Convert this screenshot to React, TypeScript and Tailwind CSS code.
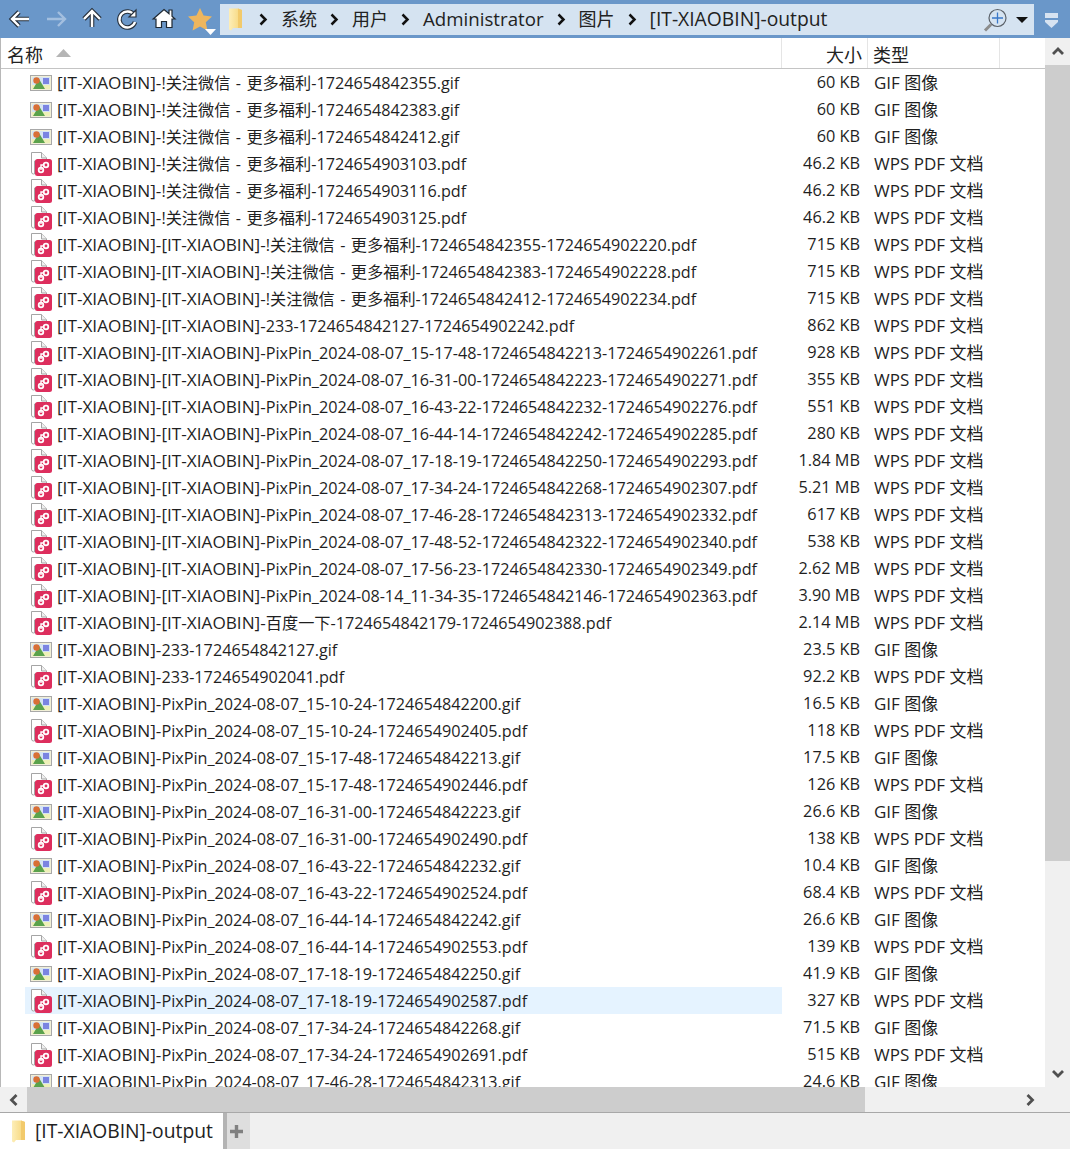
const font = 'font-["Open_Sans","Noto_Sans_CJK_SC",sans-serif]';

const G = 'GIF 图像';
const P = 'WPS PDF 文档';
const A = '[IT-XIAOBIN]-';
const B = '[IT-XIAOBIN]-[IT-XIAOBIN]-';
const C = '[IT-XIAOBIN]-[IT-XIAOBIN]-PixPin_2024-08-';
const D = '[IT-XIAOBIN]-PixPin_2024-08-07_';

const rows: [string, string][] = [
  [A + '!关注微信 - 更多福利-1724654842355.gif', '60 KB'],
  [A + '!关注微信 - 更多福利-1724654842383.gif', '60 KB'],
  [A + '!关注微信 - 更多福利-1724654842412.gif', '60 KB'],
  [A + '!关注微信 - 更多福利-1724654903103.pdf', '46.2 KB'],
  [A + '!关注微信 - 更多福利-1724654903116.pdf', '46.2 KB'],
  [A + '!关注微信 - 更多福利-1724654903125.pdf', '46.2 KB'],
  [B + '!关注微信 - 更多福利-1724654842355-1724654902220.pdf', '715 KB'],
  [B + '!关注微信 - 更多福利-1724654842383-1724654902228.pdf', '715 KB'],
  [B + '!关注微信 - 更多福利-1724654842412-1724654902234.pdf', '715 KB'],
  [B + '233-1724654842127-1724654902242.pdf', '862 KB'],
  [C + '07_15-17-48-1724654842213-1724654902261.pdf', '928 KB'],
  [C + '07_16-31-00-1724654842223-1724654902271.pdf', '355 KB'],
  [C + '07_16-43-22-1724654842232-1724654902276.pdf', '551 KB'],
  [C + '07_16-44-14-1724654842242-1724654902285.pdf', '280 KB'],
  [C + '07_17-18-19-1724654842250-1724654902293.pdf', '1.84 MB'],
  [C + '07_17-34-24-1724654842268-1724654902307.pdf', '5.21 MB'],
  [C + '07_17-46-28-1724654842313-1724654902332.pdf', '617 KB'],
  [C + '07_17-48-52-1724654842322-1724654902340.pdf', '538 KB'],
  [C + '07_17-56-23-1724654842330-1724654902349.pdf', '2.62 MB'],
  [C + '14_11-34-35-1724654842146-1724654902363.pdf', '3.90 MB'],
  [B + '百度一下-1724654842179-1724654902388.pdf', '2.14 MB'],
  [A + '233-1724654842127.gif', '23.5 KB'],
  [A + '233-1724654902041.pdf', '92.2 KB'],
  [D + '15-10-24-1724654842200.gif', '16.5 KB'],
  [D + '15-10-24-1724654902405.pdf', '118 KB'],
  [D + '15-17-48-1724654842213.gif', '17.5 KB'],
  [D + '15-17-48-1724654902446.pdf', '126 KB'],
  [D + '16-31-00-1724654842223.gif', '26.6 KB'],
  [D + '16-31-00-1724654902490.pdf', '138 KB'],
  [D + '16-43-22-1724654842232.gif', '10.4 KB'],
  [D + '16-43-22-1724654902524.pdf', '68.4 KB'],
  [D + '16-44-14-1724654842242.gif', '26.6 KB'],
  [D + '16-44-14-1724654902553.pdf', '139 KB'],
  [D + '17-18-19-1724654842250.gif', '41.9 KB'],
  [D + '17-18-19-1724654902587.pdf', '327 KB'],
  [D + '17-34-24-1724654842268.gif', '71.5 KB'],
  [D + '17-34-24-1724654902691.pdf', '515 KB'],
  [D + '17-46-28-1724654842313.gif', '24.6 KB'],
];

function GifIcon() {
  return (
    <svg width="22" height="16" viewBox="0 0 22 16" className="shrink-0">
      <rect x="0.5" y="0.5" width="21" height="15" fill="#f1efd6" stroke="#a8a8a8" />
      <rect x="2" y="2" width="18" height="8" fill="#d5e4f4" />
      <rect x="2" y="10" width="18" height="4" fill="#eef0b8" />
      <path d="M3 14L9 4l6 10z" fill="#5ba24c" />
      <circle cx="6.500" cy="5.500" r="3.200" fill="#d96f35" />
      <rect x="13" y="3" width="6" height="6" fill="#7a84e2" />
    </svg>
  );
}

function PdfIcon() {
  return (
    <svg width="22" height="26" viewBox="0 0 22 26" className="shrink-0">
      <path d="M1.500 1.500h10l5 5.500v3h-12v13h-1q-2 0-2-2z" fill="#fff" stroke="#a5a5a5" />
      <path d="M11.500 1.500v5.500h5" fill="#efefef" stroke="#a5a5a5" />
      <rect x="5" y="8" width="17" height="17" rx="2.500" fill="#dd2e5d" />
      <circle cx="16" cy="14" r="2.300" fill="none" stroke="#fff" strokeWidth="1.800" />
      <circle cx="11" cy="19" r="2.300" fill="none" stroke="#fff" strokeWidth="1.800" />
      <path d="M13.500 14h-2.500v5" fill="none" stroke="#fff" strokeWidth="1.400" />
    </svg>
  );
}

function FolderIcon({ className, id }: { className: string; id: string }) {
  return (
    <svg viewBox="0 0 15 23" className={className}>
      <defs>
        <linearGradient id={id} x1="0" x2="1" y1="0" y2="0">
          <stop offset="0" stopColor="#fdeeb8" />
          <stop offset="0.7" stopColor="#f8dc8a" />
          <stop offset="1" stopColor="#f1c765" />
        </linearGradient>
      </defs>
      <path d="M1 0.500h9l4 1.500v18H5l-2 2.500-2-1z" fill={`url(#${id})`} />
      <path d="M10 0.500l4 1.500v18h-4z" fill="#f2ca6b" />
    </svg>
  );
}

function Chevron({ dir }: { dir: 'up' | 'down' | 'left' | 'right' }) {
  const paths = {
    up: 'M2 9l5-5 5 5',
    down: 'M2 5l5 5 5-5',
    left: 'M9.500 2l-5 5 5 5',
    right: 'M4.500 2l5 5-5 5',
  };
  return (
    <svg width="14" height="14" viewBox="0 0 14 14" fill="none" className="shrink-0">
      <path d={paths[dir]} stroke="#505050" strokeWidth="2.800" />
    </svg>
  );
}

function Crumb() {
  return (
    <svg width="9" height="13" viewBox="0 0 9 13" fill="none" className="shrink-0">
      <path d="M1.500 1.500l5 5-5 5" stroke="#111" strokeWidth="2.500" />
    </svg>
  );
}

function NavIcons() {
  return (
    <svg width="220" height="38" viewBox="0 0 220 38" fill="none" className="shrink-0">
      <g stroke="#26303c" strokeWidth="4.600">
        <path d="M12 19h17M19 12l-7 7 7 7" />
        <path d="M92 27V12M84 19l8-8 8 8" />
        <path d="M134 15a8 8 0 1 0 1 7" />
      </g>
      <g stroke="#fff" strokeWidth="2.400">
        <path d="M12 19h17M19 12l-7 7 7 7" />
        <path d="M92 27V12M84 19l8-8 8 8" />
        <path d="M134 15a8 8 0 1 0 1 7" />
      </g>
      <path d="M136 10v7h-7z" fill="#fff" stroke="#26303c" strokeWidth="1.200" />
      <path d="M47 19h18M58 12l7 7-7 7" stroke="#a3bfdf" strokeWidth="2.400" />
      <path d="M164 9.500l5 4.200V10h3v6.200l3 2.800h-3v8.500h-5.500v-6h-5v6H156V19h-2.800z" fill="#fff" stroke="#1f2933" strokeWidth="1.200" />
      <path d="M200 8l3.600 7.600 8.400 1-6.200 5.700 1.600 8.200-7.400-4.100-7.400 4.100 1.600-8.200-6.200-5.700 8.400-1z" fill="#eeb65e" />
      <path d="M205 29h11l-5.500 6z" fill="#fff" />
    </svg>
  );
}

function Row({ name, size }: { name: string; size: string }) {
  const pdf = name.endsWith('.pdf');
  const selected = name.endsWith('902587.pdf');
  // the bracket prefix runs wider than the digits in the reference font
  const prefix = name.match(/^(\[IT-XIAOBIN\]-)+/)?.[0] ?? '';
  return (
    <div className="flex h-[27px] shrink-0 items-center pl-[24px] leading-[27px] text-[#1f1f1f]">
      <div className={`flex h-full w-[757px] shrink-0 items-center pl-[5px] ${selected ? 'bg-[#e5f3ff]' : ''}`}>
        <span className="flex w-[27px] shrink-0">{pdf ? <PdfIcon /> : <GifIcon />}</span>
        <span className="whitespace-nowrap text-[16.2px] [word-spacing:1.2px]">
          <span className="text-[17.2px]">{prefix}</span>
          {name.slice(prefix.length)}
        </span>
      </div>
      <span className="w-[78px] shrink-0 text-right text-[16.3px]">{size}</span>
      <span className="ml-[14px] whitespace-nowrap text-[17px]">{pdf ? P : G}</span>
    </div>
  );
}

export default function App() {
  return (
    <div className={`flex h-[1149px] w-[1070px] flex-col overflow-hidden bg-white ${font}`}>
      <div className="flex h-[38px] shrink-0 items-center bg-[#6a97c9]">
        <NavIcons />
        <div className="mb-[-1px] flex h-[31px] w-[814px] shrink-0 items-center bg-[#d5e3f1] pl-[8px] text-[#222]">
          <FolderIcon id="addr" className="h-[23px] w-[15px] shrink-0" />
          <div className="ml-[16px] flex items-center gap-[13px]">
            <Crumb />
            <span className="text-[18px]">系统</span>
            <Crumb />
            <span className="text-[18px]">用户</span>
            <Crumb />
            <span className="text-[18.7px]">Administrator</span>
            <Crumb />
            <span className="text-[18px]">图片</span>
            <Crumb />
            <span className="text-[19.3px]">[IT-XIAOBIN]-output</span>
          </div>
          <span className="flex-1" />
          <svg width="24" height="24" viewBox="0 0 24 24" fill="none" className="shrink-0">
            <circle cx="14.500" cy="10" r="8.500" stroke="#5a6068" strokeWidth="1.200" />
            <path d="M14.500 4.500v11M9 10h11" stroke="#3a78c8" strokeWidth="1.300" />
            <path d="M8 16.500L2 22.500" stroke="#8c8c8c" strokeWidth="3" />
          </svg>
          <svg width="12" height="6" viewBox="0 0 12 6" className="ml-[9px] mr-[6px] shrink-0">
            <path d="M0 0h12L6 6z" fill="#111" />
          </svg>
        </div>
        <svg width="13" height="15" viewBox="0 0 13 15" className="ml-[11px] mb-[-3px] shrink-0">
          <rect x="0" y="0" width="13" height="5" fill="#d7e3f1" />
          <path d="M0 7h13v2l-6.500 6L0 9z" fill="#d7e3f1" />
        </svg>
      </div>
      <div className="flex h-[1049px] shrink-0 border-l border-[#b8b8b8]">
        <div className="flex min-w-0 flex-1 flex-col">
          <div className="flex h-[31px] shrink-0 items-center border-b border-[#c4c4c4] text-[18px] text-[#222]">
            <div className="flex h-full w-[781px] items-center border-r border-[#e5e5e5] pl-[6px] pt-[4px]">
              <span>名称</span>
              <svg width="15" height="8" viewBox="0 0 15 8" className="ml-[13px] mb-[4px]">
                <path d="M0 8L7.500 0 15 8z" fill="#b5b5b5" />
              </svg>
            </div>
            <div className="flex h-full w-[86px] items-center justify-end border-r border-[#e5e5e5] pr-[5px] pt-[4px]">大小</div>
            <div className="flex h-full w-[132px] items-center border-r border-[#e5e5e5] pl-[5px] pt-[4px]">类型</div>
          </div>
          <div className="flex min-h-0 flex-1 flex-col overflow-hidden">
            {rows.map(([name, size]) => (
              <Row key={name} name={name} size={size} />
            ))}
          </div>
        </div>
        <div className="flex w-[25px] shrink-0 flex-col items-center bg-[#f0f0f0]">
          <div className="flex h-[27px] w-full items-center justify-center"><Chevron dir="up" /></div>
          <div className="h-[796px] w-full bg-[#cdcdcd]" />
          <div className="flex-1" />
          <div className="mb-[2px] flex h-[25px] w-full items-center justify-center"><Chevron dir="down" /></div>
        </div>
      </div>
      <div className="flex h-[25px] shrink-0 items-center bg-[#f0f0f0]">
        <div className="flex w-[27px] justify-center"><Chevron dir="left" /></div>
        <div className="h-full w-[838px] bg-[#cdcdcd]" />
        <div className="flex-1" />
        <div className="flex w-[50px] justify-start pl-[3px]"><Chevron dir="right" /></div>
      </div>
      <div className="flex flex-1 border-t border-[#a8a8a8] bg-[#f0f0f0]">
        <div className="flex w-[223px] items-center gap-[9px] bg-white pl-[11px] text-[19.3px] text-[#222]">
          <FolderIcon id="tab" className="h-[23px] w-[15px] shrink-0" />
          <span>[IT-XIAOBIN]-output</span>
        </div>
        <div className="flex w-[27px] items-center justify-center border-l-4 border-[#b4b4b4] bg-[#dedede] pr-[4px]">
          <svg width="13" height="13" viewBox="0 0 13 13">
            <path d="M6.500 0v13M0 6.500h13" stroke="#808080" strokeWidth="3.400" />
          </svg>
        </div>
      </div>
    </div>
  );
}
